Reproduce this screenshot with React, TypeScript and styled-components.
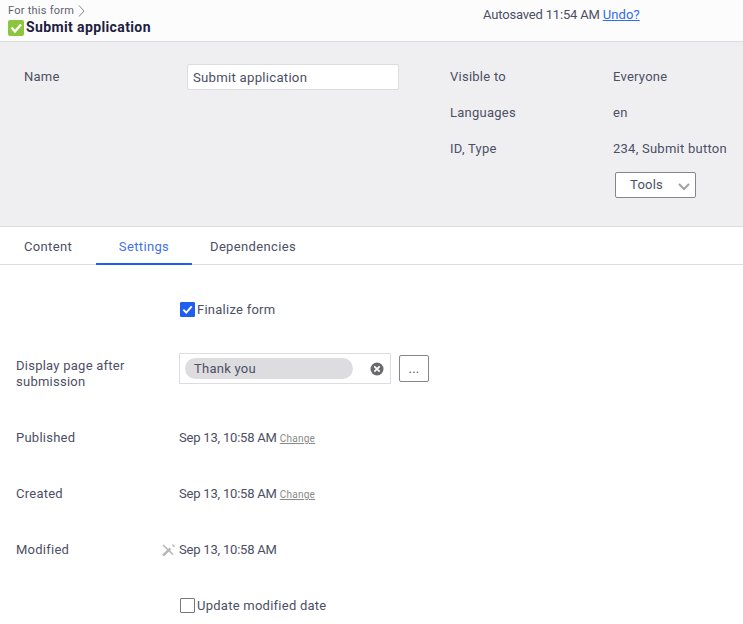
import React from 'react';
import styled, { createGlobalStyle } from 'styled-components';

const Global = createGlobalStyle`
  html, body { margin: 0; padding: 0; background: #ffffff; }
  body { font-family: Roboto, "Liberation Sans", sans-serif; font-size: 13px; color: #4c4f65; letter-spacing: .25px; }
`;
const Page = styled.div`
  width: 743px;
  height: 624px;
  overflow: hidden;
`;
const TopBar = styled.div`
  height: 41px;
  background: #fcfcfc;
  border-bottom: 1px solid #dcdcdc;
  display: flex;
  justify-content: space-between;
`;
const Crumbs = styled.div`
  padding: 4px 0 0 8px;
`;
const Parent = styled.div`
  display: flex;
  align-items: center;
  gap: 4px;
  font-size: 11px;
  line-height: 14px;
  color: #5f6272;
`;
const Title = styled.div`
  display: flex;
  align-items: center;
  gap: 2px;
  height: 17px;
  font-size: 14px;
  font-weight: 700;
  letter-spacing: .38px;
  color: #1d2140;
`;
const Saved = styled.div`
  width: 260px;
  padding-top: 7px;
  line-height: 16px;
  font-size: 13px;
  letter-spacing: -.18px;
`;
const Link = styled.a`
  color: #2f6bf0;
  text-decoration: underline;
  letter-spacing: .1px;
`;
const Panel = styled.div`
  background: #efeff2;
  border-bottom: 1px solid #dcdcdc;
  display: flex;
  padding: 23px 0 0 24px;
  box-sizing: border-box;
  height: 185px;
`;
const NameLabel = styled.div`
  width: 163px;
  line-height: 24px;
`;
const NameInput = styled.div`
  width: 212px;
  height: 26px;
  margin-top: -1px;
  box-sizing: border-box;
  background: #ffffff;
  border: 1px solid #dcdce0;
  border-radius: 2px;
  padding-left: 5px;
  line-height: 25px;
  font-size: 13.2px;
`;
const Meta = styled.div`
  margin-left: 51px;
  display: grid;
  grid-template-columns: 163px auto;
  grid-auto-rows: 36px;
  align-content: start;
  line-height: 24px;
`;
const ToolsButton = styled.div`
  grid-column: 2;
  width: 81px;
  height: 26px;
  margin: -1px 0 0 2px;
  box-sizing: border-box;
  background: #ffffff;
  border: 1px solid #85858c;
  border-radius: 2px;
  display: flex;
  align-items: center;
  padding-left: 14px;
  gap: 14px;
`;
const Tabs = styled.div`
  height: 38px;
  box-sizing: border-box;
  border-bottom: 1px solid #dcdcdc;
  display: flex;
`;
const Tab = styled.div<{ $active?: boolean }>`
  box-sizing: border-box;
  height: 38px;
  line-height: 39px;
  letter-spacing: .35px;
  color: #4c4f65;
  border-bottom: 2px solid transparent;
  &:nth-child(1) { width: 96px; padding-left: 24px; }
  &:nth-child(3) { padding-left: 18px; }
  ${p => p.$active ? `
    width: 96px;
    text-align: center;
    color: #3f72ee;
    border-bottom-color: #1f5ff0;
  ` : ''}
`;
const Form = styled.div`
  padding: 37px 0 0 16px;
  display: flex;
  flex-direction: column;
`;
const Row = styled.div<{ $height: number }>`
  display: flex;
  align-items: flex-start;
  height: ${p => p.$height}px;
`;
const Label = styled.div`
  width: 144px;
  line-height: 16px;
  flex: none;
`;
const LabelIcon = styled.div`
  width: 19px;
  box-sizing: border-box;
  padding: 1px 0 0 2px;
  flex: none;
`;
const Value = styled.div`
  display: flex;
  align-items: baseline;
  gap: 3px;
  line-height: 16px;
  letter-spacing: -.2px;
`;
const Change = styled.a`
  font-size: 10px;
  letter-spacing: .25px;
  color: #8a8a8a;
  text-decoration: underline;
`;
const CheckLine = styled.label`
  display: flex;
  align-items: flex-start;
  gap: 2px;
  line-height: 15px;
  margin-left: 164px;
`;
const Box = styled.span<{ $on?: boolean }>`
  width: 15px;
  height: 15px;
  box-sizing: border-box;
  border-radius: 1px;
  background: ${p => p.$on ? '#1f5ff0' : '#ffffff'};
  border: 1px solid ${p => p.$on ? '#1f5ff0' : '#77777c'};
  display: flex;
  align-items: center;
  justify-content: center;
`;
const PickerWrap = styled.div`
  margin: -5px 0 0 19px;
  display: flex;
  align-items: center;
  gap: 8px;
`;
const Picker = styled.div`
  width: 212px;
  height: 31px;
  box-sizing: border-box;
  border: 1px solid #dddde0;
  display: flex;
  align-items: center;
  padding: 0 6px 0 5px;
  justify-content: space-between;
`;
const Chip = styled.div`
  width: 168px;
  height: 21px;
  line-height: 21px;
  border-radius: 11px;
  background: #dddddf;
  padding-left: 9px;
  box-sizing: border-box;
`;
const DotsButton = styled.div`
  width: 30px;
  height: 27px;
  box-sizing: border-box;
  border: 1px solid #85858c;
  border-radius: 2px;
  text-align: center;
  line-height: 26px;
  background: #ffffff;
`;

const Check = ({ color = '#ffffff', size = 11 }: { color?: string; size?: number }) => (
  <svg width={size} height={size} viewBox="0 0 12 12" fill="none">
    <path d="M1.5 6.2 4.6 9.4 10.6 2.6" stroke={color} strokeWidth="2" />
  </svg>
);

const Status = () => (
  <svg width="16" height="16" viewBox="0 0 16 16" style={{ marginTop: 3 }}>
    <rect width="16" height="16" rx="2" fill="#8cc63f" />
    <path d="M3.5 7.5 7 11.5 13 4.5" fill="none" stroke="#ffffff" strokeWidth="2.4" />
  </svg>
);

const Chevron = () => (
  <svg width="7" height="12" viewBox="0 0 7 12" fill="none">
    <path d="M1 .5l5 5.5-5 5.5" stroke="#8a8a90" strokeWidth="1" />
  </svg>
);

const Caret = () => (
  <svg width="14" height="8" viewBox="0 0 14 8" fill="none" style={{ marginTop: 3 }}>
    <path d="M2 1l5 5 5-5" stroke="#a3a3a6" strokeWidth="2" />
  </svg>
);

const Clear = () => (
  <svg width="14" height="14" viewBox="0 0 14 14">
    <circle cx="7" cy="7" r="6.5" fill="#6a6a6e" />
    <path d="M4.3 4.3l5.4 5.4M9.7 4.3l-5.4 5.4" stroke="#ffffff" strokeWidth="1.7" />
  </svg>
);

const Unpin = () => (
  <svg width="14" height="14" viewBox="0 0 14 14" fill="none">
    <path d="M1 2 11 11.5" stroke="#b8b8b8" strokeWidth="1.6" />
    <path d="M1 12.5 8.5 5.5" stroke="#b8b8b8" strokeWidth="2.4" />
    <path d="M10.5 1.5l.8 1.4 1.4.6" stroke="#b8b8b8" strokeWidth="1.4" />
  </svg>
);

const App: React.FC = () => {
  return (
    <Page>
      <Global />
      <TopBar>
        <Crumbs>
          <Parent>For this form <Chevron /></Parent>
          <Title><Status />Submit application</Title>
        </Crumbs>
        <Saved>Autosaved 11:54 AM <Link href="#">Undo?</Link></Saved>
      </TopBar>
      <Panel>
        <NameLabel>Name</NameLabel>
        <NameInput>Submit application</NameInput>
        <Meta>
          <div>Visible to</div><div>Everyone</div>
          <div>Languages</div><div>en</div>
          <div>ID, Type</div><div>234, Submit button</div>
          <ToolsButton>Tools <Caret /></ToolsButton>
        </Meta>
      </Panel>
      <Tabs>
        <Tab>Content</Tab>
        <Tab $active>Settings</Tab>
        <Tab>Dependencies</Tab>
      </Tabs>
      <Form>
        <Row $height={56}>
          <CheckLine><Box $on><Check /></Box>Finalize form</CheckLine>
        </Row>
        <Row $height={72}>
          <Label>Display page after submission</Label>
          <PickerWrap>
            <Picker><Chip>Thank you</Chip><Clear /></Picker>
            <DotsButton>...</DotsButton>
          </PickerWrap>
        </Row>
        <Row $height={56}>
          <Label>Published</Label>
          <LabelIcon />
          <Value>Sep 13, 10:58 AM <Change>Change</Change></Value>
        </Row>
        <Row $height={56}>
          <Label>Created</Label>
          <LabelIcon />
          <Value>Sep 13, 10:58 AM <Change>Change</Change></Value>
        </Row>
        <Row $height={56}>
          <Label>Modified</Label>
          <LabelIcon><Unpin /></LabelIcon>
          <Value>Sep 13, 10:58 AM</Value>
        </Row>
        <Row $height={24}>
          <CheckLine><Box />Update modified date</CheckLine>
        </Row>
      </Form>
    </Page>
  );
};
export default App;
